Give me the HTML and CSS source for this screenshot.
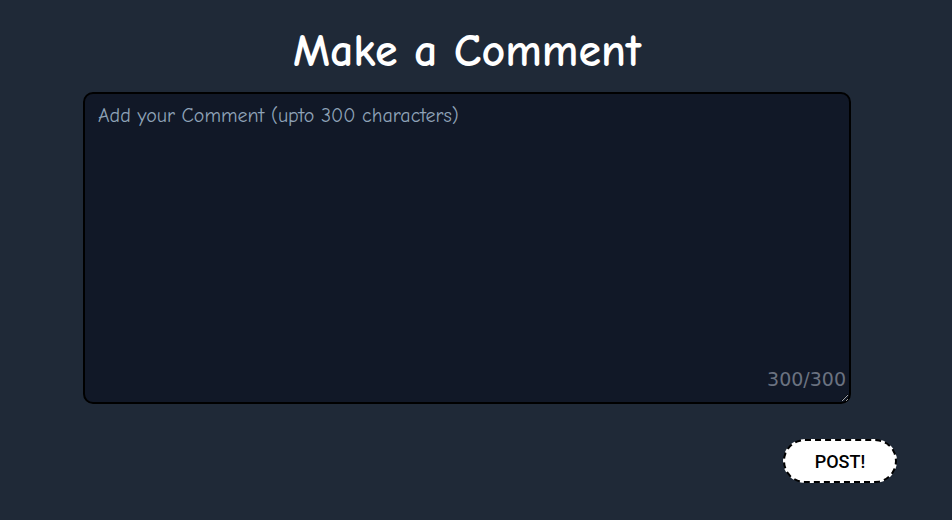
FILE: index.html
```html
<!DOCTYPE html>
<html lang="en">
<head>
<meta charset="utf-8">
<title>Make a Comment</title>
<link rel="stylesheet" href="styles.css">
</head>
<body>
<main class="page">
  <h1 class="title">Make a Comment</h1>
  <form class="comment-form">
    <div class="field">
      <textarea class="comment-input" maxlength="300" placeholder="Add your Comment (upto 300 characters)"></textarea>
      <span class="counter">300/300</span>
    </div>
    <div class="actions">
      <button type="button" class="post-btn">POST!</button>
    </div>
  </form>
</main>
</body>
</html>
```
FILE: styles.css
```css
html, body {
  margin: 0;
  padding: 0;
  background: #1f2937;
}
body {
  min-height: 520px;
  font-family: "Comic Sans MS", "Comic Neue", "Lato", "Noto Sans", sans-serif;
}
.page {
  width: 934px;
  display: flex;
  flex-direction: column;
  align-items: center;
  padding-top: 26px;
}
.title {
  margin: 0;
  color: #ffffff;
  font-size: 46px;
  font-weight: 700;
  line-height: 52px;
}
.comment-form {
  margin-top: 14px;
  width: 768px;
  display: flex;
  flex-direction: column;
}
.field {
  position: relative;
  height: 312px;
}
.comment-input {
  box-sizing: border-box;
  width: 768px;
  height: 312px;
  background: #111827;
  border: 2px solid #000000;
  border-radius: 10px;
  padding: 9px 13px;
  color: #e5e7eb;
  font-family: inherit;
  font-size: 20px;
  line-height: 26px;
  outline: none;
  resize: both;
}
.comment-input::placeholder {
  color: #8fa3b8;
}
.counter {
  position: absolute;
  right: 5px;
  bottom: 14px;
  color: #6b7280;
  font-family: "DejaVu Sans", "Noto Sans", sans-serif;
  font-size: 19px;
  line-height: 22px;
  pointer-events: none;
}
.actions {
  display: flex;
  justify-content: flex-end;
  margin-top: 35px;
  margin-right: -46px;
}
.post-btn {
  width: 114px;
  height: 44px;
  background: #ffffff;
  border: 2px dashed #000000;
  border-radius: 22px;
  color: #000000;
  font-family: "Roboto", "Liberation Sans", sans-serif;
  font-size: 18px;
  font-weight: 500;
  cursor: pointer;
}
```
